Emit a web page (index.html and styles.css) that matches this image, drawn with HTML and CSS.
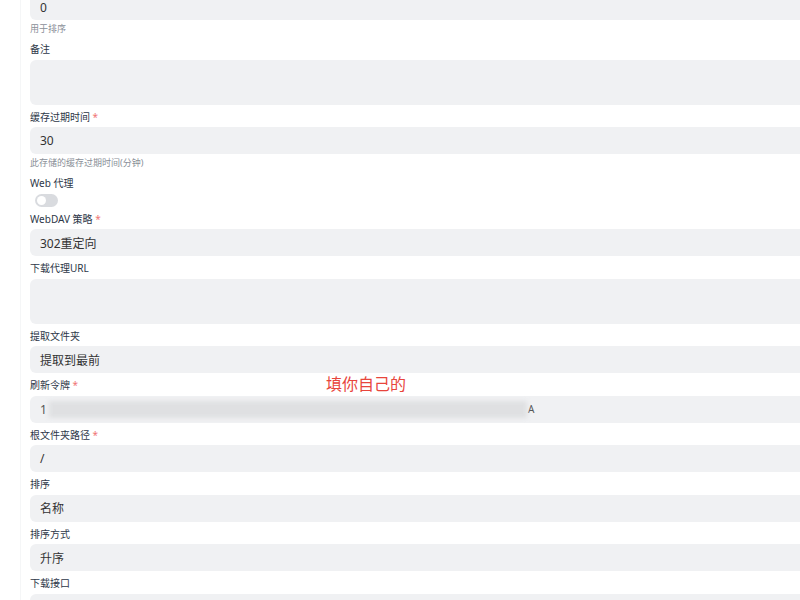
FILE: index.html
```html
<!DOCTYPE html>
<html lang="zh-CN">
<head>
  <meta charset="UTF-8" />
  <meta name="viewport" content="width=device-width, initial-scale=1.0"/>
  <title>存储设置</title>
  <link rel="stylesheet" href="styles.css">
</head>
<body>
  <div class="panel">
    <form class="storage-form">
      <div class="field">
        <div class="input first">0</div>
        <small class="help">用于排序</small>
      </div>

      <div class="field">
        <label>备注</label>
        <div class="input textarea"></div>
      </div>

      <div class="field">
        <label>缓存过期时间 <span class="req">*</span></label>
        <div class="input">30</div>
        <small class="help">此存储的缓存过期时间(分钟)</small>
      </div>

      <div class="field">
        <label>Web 代理</label>
        <span class="switch"><span class="knob"></span></span>
      </div>

      <div class="field">
        <label>WebDAV 策略 <span class="req">*</span></label>
        <div class="input">302重定向</div>
      </div>

      <div class="field">
        <label>下载代理URL</label>
        <div class="input textarea"></div>
      </div>

      <div class="field">
        <label>提取文件夹</label>
        <div class="input">提取到最前</div>
      </div>

      <div class="field token-field">
        <label>刷新令牌 <span class="req">*</span></label>
        <div class="input token">
          <span class="head">1</span>
          <span class="blurred"></span>
          <span class="tail">A</span>
        </div>
        <div class="note">填你自己的</div>
      </div>

      <div class="field">
        <label>根文件夹路径 <span class="req">*</span></label>
        <div class="input">/</div>
      </div>

      <div class="field">
        <label>排序</label>
        <div class="input">名称</div>
      </div>

      <div class="field">
        <label>排序方式</label>
        <div class="input">升序</div>
      </div>

      <div class="field">
        <label>下载接口</label>
        <div class="input"></div>
      </div>
    </form>
  </div>
</body>
</html>
```

FILE: styles.css
```css
* { box-sizing: border-box; }
html, body {
  margin: 0;
  padding: 0;
  overflow: hidden;
  background: #fff;
}
body {
  font-family: 'Noto Sans', 'Noto Sans CJK SC', sans-serif;
  color: #2d3748;
}
.panel {
  margin-left: 20px;
  border-left: 1px solid #f5f6f7;
  padding-left: 9px;
  width: 840px;
}
.storage-form {
  display: flex;
  flex-direction: column;
}
.field {
  display: flex;
  flex-direction: column;
  align-items: flex-start;
  position: relative;
}
.field label {
  font-size: 10px;
  line-height: 13.5px;
  margin: 6px 0 3px;
  color: #2d3748;
}
.req {
  color: #f07575;
}
.help {
  font-size: 9px;
  line-height: 12px;
  margin: 3px 0 2px;
  color: #8a8f98;
}
.input {
  width: 100%;
  height: 27px;
  background: #f0f1f3;
  border-radius: 6px;
  padding: 0 10px;
  font-size: 12px;
  color: #333;
  display: flex;
  align-items: center;
}
.input.first {
  margin-top: -6px;
  height: 26px;
}
.input.textarea {
  height: 45px;
}
.switch {
  width: 23px;
  height: 13px;
  border-radius: 7px;
  background: #d9dbdf;
  margin: 0 0 0 5px;
  padding: 2px;
  display: flex;
}
.knob {
  width: 9px;
  height: 9px;
  border-radius: 50%;
  background: #fff;
}
.token .head {
  color: #555;
}
.blurred {
  width: 478px;
  height: 17px;
  margin-left: 2px;
  background: #dfe0e2;
  filter: blur(2px);
}
.tail {
  font-size: 10px;
  color: #555;
  margin-left: 1px;
}
.note {
  position: absolute;
  left: 296px;
  top: -2px;
  font-size: 16px;
  color: #e8453c;
}
```
